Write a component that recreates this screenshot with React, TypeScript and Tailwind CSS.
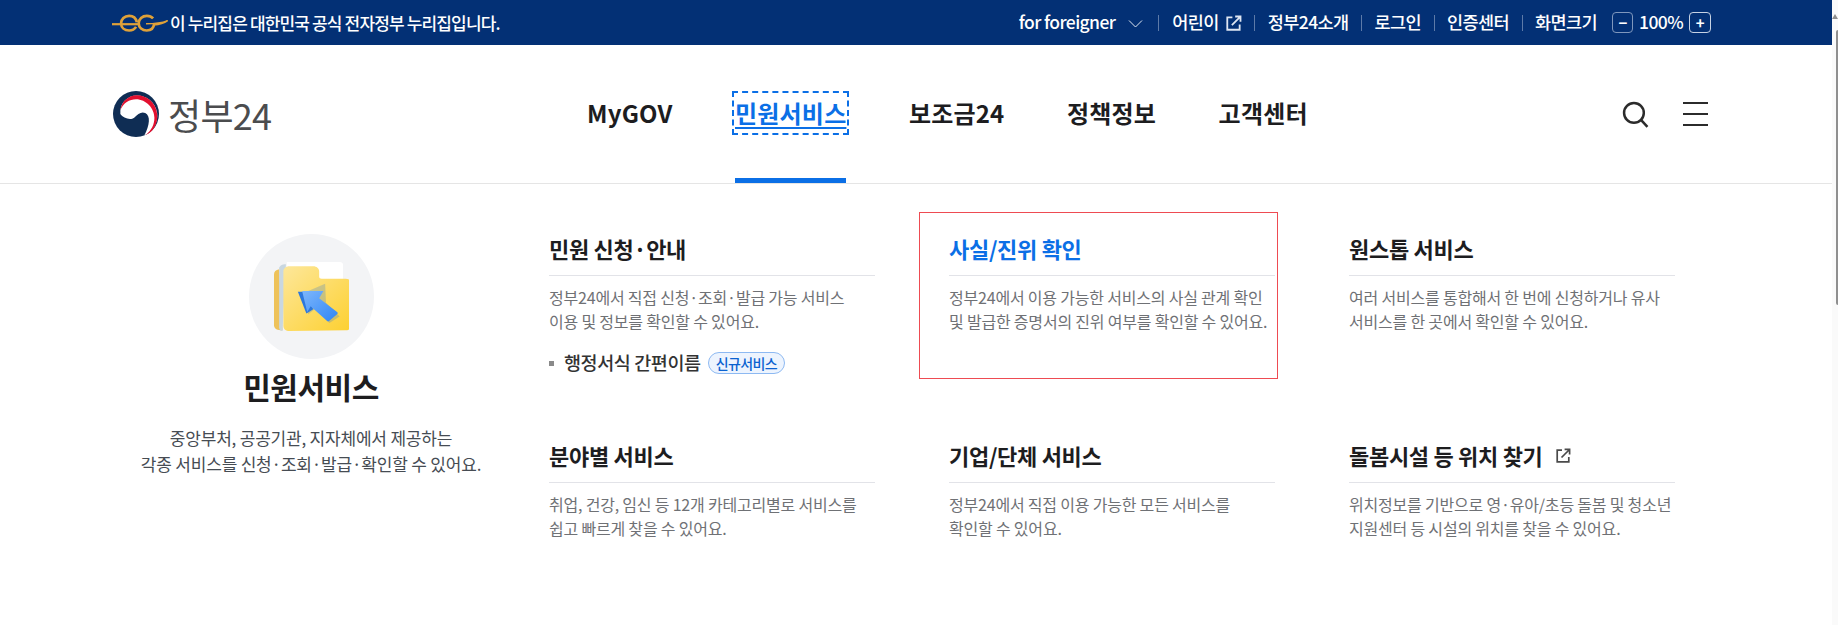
const topLinks = ["정부24소개", "로그인", "인증센터"];
const navItems = ["MyGOV", "민원서비스", "보조금24", "정책정보", "고객센터"];

type MenuCard = {
  title: string;
  lines: string[];
  active?: boolean;
  external?: boolean;
  subLink?: boolean;
};

const menuCards: MenuCard[] = [
  {
    title: "민원 신청·안내",
    lines: ["정부24에서 직접 신청·조회·발급 가능 서비스", "이용 및 정보를 확인할 수 있어요."],
    subLink: true,
  },
  {
    title: "사실/진위 확인",
    lines: ["정부24에서 이용 가능한 서비스의 사실 관계 확인", "및 발급한 증명서의 진위 여부를 확인할 수 있어요."],
    active: true,
  },
  {
    title: "원스톱 서비스",
    lines: ["여러 서비스를 통합해서 한 번에 신청하거나 유사", "서비스를 한 곳에서 확인할 수 있어요."],
  },
  {
    title: "분야별 서비스",
    lines: ["취업, 건강, 임신 등 12개 카테고리별로 서비스를", "쉽고 빠르게 찾을 수 있어요."],
  },
  {
    title: "기업/단체 서비스",
    lines: ["정부24에서 직접 이용 가능한 모든 서비스를", "확인할 수 있어요."],
  },
  {
    title: "돌봄시설 등 위치 찾기",
    lines: ["위치정보를 기반으로 영·유아/초등 돌봄 및 청소년", "지원센터 등 시설의 위치를 찾을 수 있어요."],
    external: true,
  },
];

function ExternalIcon({ className }: { className?: string }) {
  return (
    <svg viewBox="0 0 15 15" fill="none" stroke="currentColor" strokeWidth="1.7" className={className}>
      <path d="M6 2.2H1.2v11.6h11.6V9" />
      <path d="M5.5 9.5 13 2M8.6 1.4h5v5" />
    </svg>
  );
}

function EGovLogo() {
  return (
    <svg viewBox="0 0 56 18" fill="none" stroke="#dfa139" strokeWidth="2.7" className="w-[56px] h-[18px] shrink-0">
      <path d="M0 10.2h26" strokeWidth="2.2" />
      <g transform="translate(-4.5 0)">
        <path d="M29.4 8.2C28.4 3.8 25 1.8 21.6 1.8 17 1.8 13.6 5 13.6 9.3c0 4.3 3.4 7.2 8 7.2 3 0 5.6-1.4 7-3.6" />
        <path d="M45.6 4.4C44 2.6 41.6 1.8 39.4 1.8c-4.6 0-8.2 3.2-8.2 7.4 0 4.3 3.6 7.3 8 7.3 4 0 7-2.2 7.4-6.6" />
      </g>
      <path d="M34 9.8c8 0 15-.6 21.6-3.2-4 3-9.2 4-14 4.4" strokeWidth="1.5" />
    </svg>
  );
}

function TaegeukLogo() {
  return (
    <svg viewBox="0 0 100 100" className="w-[46px] h-[46px] shrink-0">
      <circle cx="50" cy="50" r="50" fill="#0f2d54" />
      <path d="M16 50c6 9 22 14 30 8 8-8 16-14 24-10 12 6 10 26-2 49 20-9 30-29 28-49C92 24 72 10 52 10 32 10 14 26 16 50Z" fill="#fff" />
      <path d="M16 42c6-16 20-24 34-24 22 0 40 20 40 40 0 14-6 28-20 38 18-6 28-26 26-46C94 26 74 9 52 9 34 9 18 22 16 42Z" fill="#e2102f" />
    </svg>
  );
}

function FolderIcon() {
  return (
    <svg viewBox="9 4 88 95" preserveAspectRatio="none" className="w-[75px] h-[69px]">
      <defs>
        <linearGradient id="folderFill" x1="0" y1="0" x2="1" y2="1">
          <stop offset="0" stopColor="#fde79a" />
          <stop offset="1" stopColor="#fdd02f" />
        </linearGradient>
        <linearGradient id="arrowFill" x1="0" y1="0" x2="1" y2="1">
          <stop offset="0" stopColor="#7db6fb" />
          <stop offset="1" stopColor="#2f86f6" />
        </linearGradient>
      </defs>
      <path d="M9 21c0-4 2-6 6-7l4 84c-6 0-10-2-10-7Z" fill="#eec25a" />
      <path d="M15 12c1-3 3-5 8-5l-4 92c-2 0-4-1-4-5Z" fill="#c9d7e0" />
      <path d="M24 4h62c3 0 4 2 4 4v28H24Z" fill="#fff" />
      <path d="M20 17c0-4 3-7 7-7h28c4 0 7 3 7 7v7c0 2 1 3 3 3h28c4 0 7 3 7 7v57c0 4-3 7-7 7l-66 1c-4 0-7-3-7-7Z" fill="url(#folderFill)" />
      <g transform="translate(0 6)">
        <path d="M40 38l6 29 9-8 16 20 12-9-16-19-1-26Z" fill="#2d74d8" opacity="0.25" transform="translate(3 3)" />
        <path d="M37 39l10 30 8-6-8-24Z" fill="#2d78dc" />
        <path d="M42 38h25l-5 10 21 19c1 1 1 2 0 3l-9 9c-1 1-2 1-3 0L52 59l-4 8Z" fill="url(#arrowFill)" />
      </g>
    </svg>
  );
}

function Card({ card }: { card: MenuCard }) {
  return (
    <div className="relative">
      {/* 포커스 표시 */}
      {card.active && <div className="absolute -left-[30px] -right-[3px] top-[-24px] h-[167px] border-[1.5px] border-[#ee4b52]" />}
      <div className="flex items-start gap-[13px] h-[40px] border-b border-[#e2e3e8]">
        <h3 className={`-mt-[3px] text-[22px] leading-[30px] font-bold tracking-[-0.3px] ${card.active ? "text-[#0b6fe6]" : "text-[#1d1d1f]"}`}>
          {card.title}
        </h3>
        {card.external && <ExternalIcon className="w-[15px] h-[15px] text-[#4a4a4a] mt-[5px]" />}
      </div>
      <p className="mt-[9px] text-[16px] leading-[24px] tracking-[-0.2px] text-[#6f7175] whitespace-nowrap">
        {card.lines[0]}
        <br />
        {card.lines[1]}
      </p>
      {card.subLink && (
        <div className="flex items-center mt-[17px] h-[26px]">
          <span className="w-[5px] h-[5px] bg-[#8a8a8a]" />
          <span className="ml-[10px] text-[18.5px] font-medium tracking-[-0.4px] text-[#333]">행정서식 간편이름</span>
          <span className="ml-[7px] flex items-center h-[22px] px-[7px] rounded-full border border-[#8db9f2] bg-[#edf4fe] text-[14px] font-medium tracking-[-0.6px] text-[#0b62d0]">
            신규서비스
          </span>
        </div>
      )}
    </div>
  );
}

export default function App() {
  return (
    <div className="flex w-full h-[625px] overflow-hidden bg-white font-['Noto_Sans_CJK_KR','Noto_Sans',sans-serif]">
      <div className="w-[1832px] shrink-0">
        {/* =================== 상단 배너 =================== */}
        <div className="flex items-center justify-between h-[45px] pl-[112px] pr-[121px] bg-[#033075] text-white">
          <div className="flex items-center gap-[2px]">
            <EGovLogo />
            <span className="text-[17px] font-medium tracking-[-0.85px]">이 누리집은 대한민국 공식 전자정부 누리집입니다.</span>
          </div>
          <div className="flex items-center text-[17.5px] font-medium tracking-[-0.6px]">
            <span>for foreigner</span>
            <svg viewBox="0 0 14 8" fill="none" stroke="#dfe6f2" className="w-[15px] h-[8px] ml-[13px] mt-[2px]">
              <path d="M.5.5 7 7 13.5.5" />
            </svg>
            <span className="w-px h-[16px] bg-[#5d7aa8] mr-[13px] ml-[15px]" />
            <span>어린이</span>
            <ExternalIcon className="w-[16px] h-[16px] ml-[7px] text-[#dfe6f2]" />
            {topLinks.map((link) => (
              <span key={link} className="flex items-center">
                <span className="w-px h-[16px] bg-[#5d7aa8] mx-[12.5px]" />
                {link}
              </span>
            ))}
            <span className="w-px h-[16px] bg-[#5d7aa8] mx-[12.5px]" />
            <span>화면크기</span>
            <span className="flex items-center justify-center w-[21px] h-[21px] ml-[15px] rounded-[4px] border border-[#7f97bd] text-[15px] font-bold leading-none">−</span>
            <span className="mx-[6px]">100%</span>
            <span className="flex items-center justify-center w-[22px] h-[21px] rounded-[4px] border border-[#c6d2e4] text-[15px] font-bold leading-none">+</span>
          </div>
        </div>

        {/* =================== 헤더 =================== */}
        <header className="flex items-center h-[139px] pl-[113px] pr-[124px] border-b border-[#e5e5e5]">
          <div className="flex items-center w-[474px] gap-[9px]">
            <TaegeukLogo />
            <span className="text-[36px] leading-none tracking-[-0.7px] text-[#4b4c4e]">정부24</span>
          </div>
          <nav className="flex items-center gap-[62.5px] h-full">
            {navItems.map((item) =>
              item === "민원서비스" ? (
                <div key={item} className="relative flex items-center h-full">
                  <a className="-mt-[2px] text-[24px] leading-[38px] font-bold tracking-[0.2px] text-[#0b6fe6] underline underline-offset-[4px] outline-2 outline-dashed outline-offset-[1px] outline-[#0b6fe6]">
                    {item}
                  </a>
                  <span className="absolute left-0 right-0 bottom-0 h-[5px] bg-[#0b6fe6]" />
                </div>
              ) : (
                <a key={item} className="-mt-[2px] text-[24px] font-bold tracking-[0.2px] text-[#1d1d1f]">
                  {item}
                </a>
              )
            )}
          </nav>
          <div className="flex items-center gap-[34px] ml-auto">
            <svg viewBox="0 0 26 26" fill="none" stroke="#2b2b2b" strokeWidth="2.4" className="w-[27px] h-[27px]">
              <circle cx="11.5" cy="11.5" r="9.5" />
              <path d="m18.5 18.5 6 6.5" />
            </svg>
            <div className="flex flex-col gap-[8.5px] w-[25px]">
              <span className="h-[2.5px] bg-[#2b2b2b]" />
              <span className="h-[2.5px] bg-[#2b2b2b]" />
              <span className="h-[2.5px] bg-[#2b2b2b]" />
            </div>
          </div>
        </header>

        {/* =================== 메뉴 패널 =================== */}
        <div className="flex pl-[112px]">
          <div className="flex flex-col items-center w-[398px] pt-[50px]">
            <div className="flex items-center justify-center w-[125px] h-[125px] rounded-full bg-[#f3f4f6]">
              <FolderIcon />
            </div>
            <h2 className="mt-[7px] text-[30px] leading-[40px] font-bold tracking-[-0.5px] text-[#1d1d1f]">민원서비스</h2>
            <p className="mt-[19px] text-center text-[17px] leading-[26px] tracking-[-0.2px] text-[#464c53] whitespace-nowrap">
              중앙부처, 공공기관, 지자체에서 제공하는
              <br />
              각종 서비스를 신청·조회·발급·확인할 수 있어요.
            </p>
          </div>
          <div className="grid grid-cols-[repeat(3,326px)] auto-rows-[207px] gap-x-[74px] ml-[39px] pt-[52px]">
            {menuCards.map((card) => (
              <Card key={card.title} card={card} />
            ))}
          </div>
        </div>
      </div>

      {/* 스크롤바 */}
      <div className="flex flex-col items-end w-[6px] bg-[#fafafa]">
        <span className="mt-[14px] w-0 h-0 border-x-[3px] border-x-transparent border-b-[5px] border-b-[#8f8f8f]" />
        <span className="mt-[11px] w-[2px] h-[275px] rounded-l-sm bg-[#8f8f8f]" />
      </div>
    </div>
  );
}
